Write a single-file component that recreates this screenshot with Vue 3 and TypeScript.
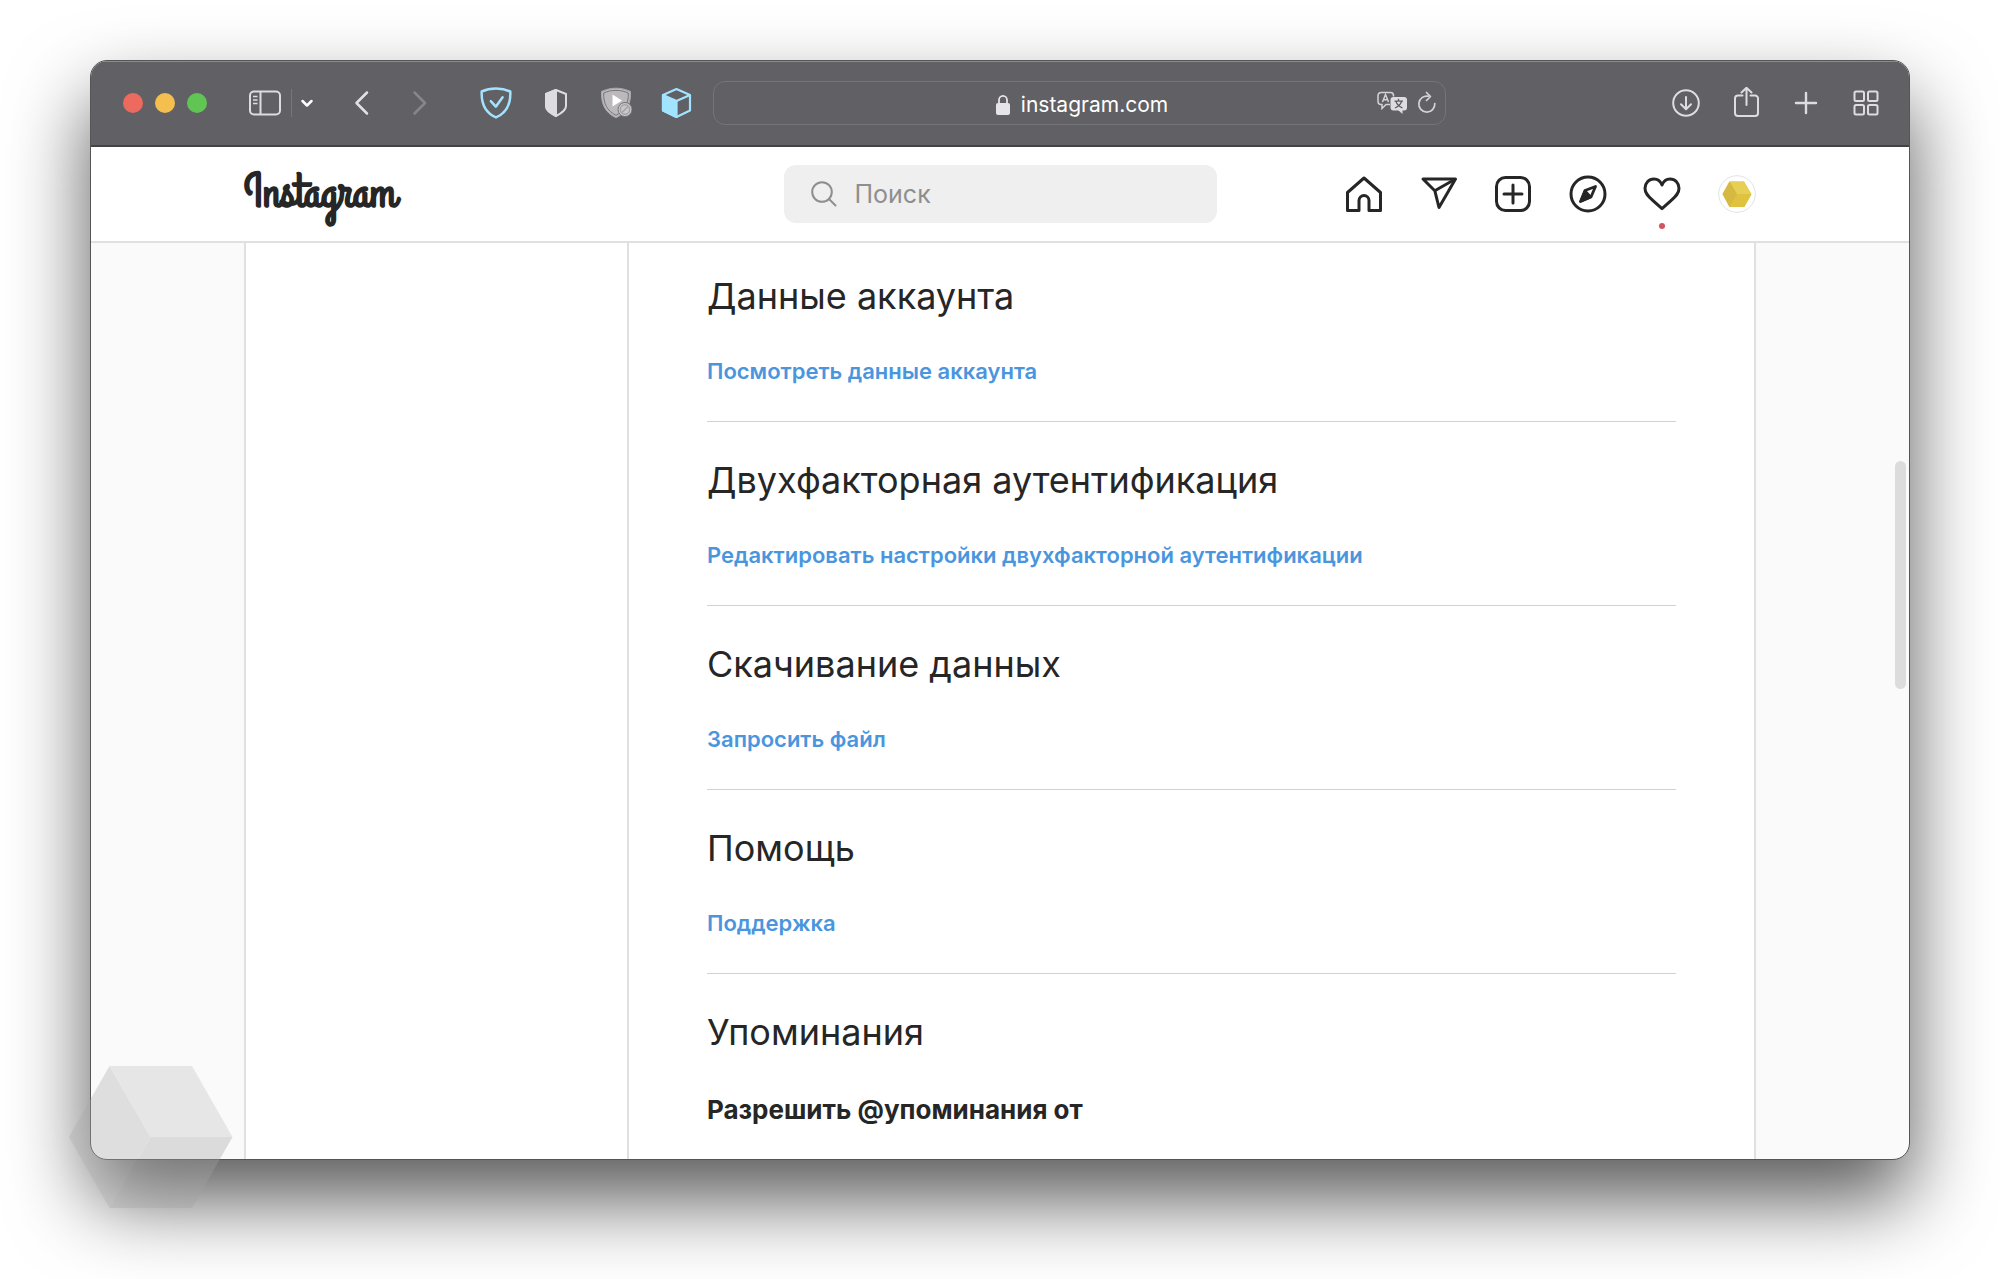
<script setup lang="ts">
interface Section {
  title: string
  link: string
}

const sections: Section[] = [
  { title: 'Данные аккаунта', link: 'Посмотреть данные аккаунта' },
  { title: 'Двухфакторная аутентификация', link: 'Редактировать настройки двухфакторной аутентификации' },
  { title: 'Скачивание данных', link: 'Запросить файл' },
  { title: 'Помощь', link: 'Поддержка' },
]
</script>

<template>
  <div class="page">
    <div class="window">
      <header class="toolbar">
        <div class="lights">
          <button class="light red" aria-label="Закрыть"></button>
          <button class="light yellow" aria-label="Свернуть"></button>
          <button class="light green" aria-label="Развернуть"></button>
        </div>
        <button class="sidebar-btn" aria-label="Боковое меню">
          <svg width="32" height="32" viewBox="0 0 32 32" fill="none" stroke="#dedce0" stroke-width="2">
            <rect x="1" y="4.500" width="30" height="23" rx="4" />
            <path d="M11.500 4.500v23" />
            <path d="M4 9.500h4.500M4 13h4.500M4 16.500h4.500" stroke-width="1.500" />
          </svg>
        </button>
        <span class="split"></span>
        <button class="chevron" aria-label="Группы вкладок">
          <svg width="14" height="14" viewBox="0 0 14 14" fill="none" stroke="#fff" stroke-width="2.500" stroke-linecap="round" stroke-linejoin="round">
            <path d="M2.500 5l4.500 4.500L11.500 5" />
          </svg>
        </button>
        <button class="back" aria-label="Назад">
          <svg width="16" height="32" viewBox="0 0 16 32" fill="none" stroke="#e2e0e4" stroke-width="2.500" stroke-linecap="round" stroke-linejoin="round">
            <path d="M13 5.500L2.500 16 13 26.500" />
          </svg>
        </button>
        <button class="forward" aria-label="Вперёд">
          <svg width="16" height="32" viewBox="0 0 16 32" fill="none" stroke="#88868a" stroke-width="2.500" stroke-linecap="round" stroke-linejoin="round">
            <path d="M2.500 5.500L13 16 2.500 26.500" />
          </svg>
        </button>
        <div class="extensions">
          <button aria-label="AdGuard">
            <svg width="32" height="32" viewBox="0 0 32 32" fill="none" stroke="#a2e4ff" stroke-width="2.500" stroke-linejoin="round" stroke-linecap="round">
              <path d="M1.700 4.500C6 2.500 10.500 1.600 16 1.600S26 2.500 30.300 4.500C30.800 16 27.500 25.500 16 30.400 4.500 25.500 1.200 16 1.700 4.500z" />
              <path d="M10.800 14.200l5 5.500 6.800-9.500" />
            </svg>
          </button>
          <button aria-label="Отчёт о конфиденциальности">
            <svg width="32" height="32" viewBox="0 0 32 32" fill="none" stroke="#dedce0" stroke-width="2" stroke-linejoin="round">
              <path d="M16 3L26 7v12c0 4.500-5 7.500-10 10-5-2.500-10-5.500-10-10V7z" />
              <path d="M16 3v26c-5-2.500-10-5.500-10-10V7z" fill="#dedce0" />
            </svg>
          </button>
          <button aria-label="Блокировка видео">
            <svg width="32" height="32" viewBox="0 0 32 32" fill="none">
              <path d="M1.500 4.500C6 2.500 10 1.200 16 1.200S26 2.500 30.500 4.500C31 16 27.500 25.500 16 30.700 4.500 25.500 1 16 1.500 4.500z" fill="#bbb9bb" stroke="#a9a7aa" />
              <path d="M3.700 6C8 4.200 11 3.400 16 3.400S24 4.200 28.300 6C28.600 16 25 24 16 28.300 7 24 3.400 16 3.700 6z" stroke="#77757a" />
              <path d="M12.500 7.500v12L22 13.500z" fill="#fff" />
              <circle cx="25" cy="22.500" r="7" fill="#c9c7c9" stroke="#77757a" />
              <circle cx="25" cy="22.500" r="4.700" stroke="#a3a1a5" stroke-width="1.500" />
              <path d="M22 25.500l6-6" stroke="#a3a1a5" stroke-width="1.500" />
            </svg>
          </button>
          <button aria-label="Кубик">
            <svg width="32" height="32" viewBox="0 0 32 32" fill="none" stroke="#a2e4ff" stroke-width="2.200" stroke-linejoin="round">
              <path d="M16.500 2L30 8v15.500L16.500 30 3 23.500V8z" />
              <path d="M3 8l13.500 6v16L3 23.500z" fill="#a2e4ff" />
              <path d="M16.500 14L30 8" />
            </svg>
          </button>
        </div>
        <div class="address">
          <div class="site">
            <svg width="16" height="22" viewBox="0 0 16 22" fill="none">
              <rect x="1" y="9" width="14" height="12" rx="2" fill="#e6e4e8" />
              <path d="M4 10V6a4 4.200 0 0 1 8 0v4" stroke="#e6e4e8" stroke-width="1.800" />
            </svg>
            <span>instagram.com</span>
          </div>
          <div class="address-actions">
            <button aria-label="Перевести">
              <svg width="30" height="24" viewBox="0 0 30 24" fill="none">
                <path d="M13 13.500H9L5 17.500v-4H4A3 3 0 0 1 1 10.500V4.500a3 3 0 0 1 3-3h9.500a3 3 0 0 1 3 3v1" stroke="#d4d2d6" stroke-width="1.500" />
                <path d="M5.500 11l3-7.500 3 7.500M6.500 8.700h4" stroke="#d4d2d6" stroke-width="1.500" />
                <rect x="13.500" y="6" width="16.500" height="13.500" rx="3" fill="#dedce0" />
                <path d="M21 19l4.500 4V19z" fill="#dedce0" />
                <path d="M21.500 7.800v2M17.500 10.200h8.500M19 10.500c1 3 3 5 6.500 6.500M24.500 10.500c-1 3-3 5-6.500 6.500" stroke="#5f5d61" stroke-width="1.300" />
              </svg>
            </button>
            <button aria-label="Обновить">
              <svg width="20" height="24" viewBox="0 0 20 24" fill="none" stroke="#d4d2d6" stroke-width="1.700" stroke-linecap="round" stroke-linejoin="round">
                <path d="M17.800 12.500a8 8 0 1 1-6.500-7.300" />
                <path d="M9.500 1.500l4 4-4 4" />
              </svg>
            </button>
          </div>
        </div>
        <div class="actions">
          <button aria-label="Загрузки">
            <svg width="32" height="32" viewBox="0 0 32 32" fill="none" stroke="#dedce0" stroke-width="2" stroke-linecap="round" stroke-linejoin="round">
              <circle cx="16" cy="16" r="12.800" />
              <path d="M16 10v12M11 17.300l5 5 5-5" />
            </svg>
          </button>
          <button aria-label="Поделиться">
            <svg width="32" height="32" viewBox="0 0 32 32" fill="none" stroke="#dedce0" stroke-width="2" stroke-linecap="round" stroke-linejoin="round">
              <path d="M12.500 8.500H8a3 3 0 0 0-3 3V26a3 3 0 0 0 3 3h17a3 3 0 0 0 3-3V11.500a3 3 0 0 0-3-3h-4.500" />
              <path d="M16.500 18V1M11.500 5.500l5-4.800 5 4.800" />
            </svg>
          </button>
          <button aria-label="Новая вкладка">
            <svg width="32" height="32" viewBox="0 0 32 32" fill="none" stroke="#dedce0" stroke-width="2.400" stroke-linecap="round">
              <path d="M16 6v20M6 16h20" />
            </svg>
          </button>
          <button aria-label="Все вкладки">
            <svg width="32" height="32" viewBox="0 0 32 32" fill="none" stroke="#dedce0" stroke-width="2">
              <rect x="4.500" y="4.500" width="9.500" height="9.500" rx="1.500" />
              <rect x="18" y="4.500" width="9.500" height="9.500" rx="1.500" />
              <rect x="4.500" y="18" width="9.500" height="9.500" rx="1.500" />
              <rect x="18" y="18" width="9.500" height="9.500" rx="1.500" />
            </svg>
          </button>
        </div>
      </header>

      <nav class="nav">
        <div class="nav-inner">
          <a class="logo" href="#">Instagram</a>
          <label class="search">
            <svg width="26" height="26" viewBox="0 0 26 26" fill="none" stroke="#8e8e8e" stroke-width="2" stroke-linecap="round">
              <circle cx="11" cy="11" r="9.800" />
              <path d="M18 18l6.500 6.500" />
            </svg>
            <input type="search" placeholder="Поиск" aria-label="Поиск" />
          </label>
          <div class="nav-icons">
            <a href="#" aria-label="Главная">
              <svg width="38" height="38" viewBox="0 0 38 38" fill="none" stroke="#262626" stroke-width="3" stroke-linejoin="round">
                <path d="M2.500 35.500V17.500L19 3l16.500 14.500v18H24V25.500a5 5 0 0 0-10 0v10z" />
              </svg>
            </a>
            <a href="#" aria-label="Сообщения">
              <svg width="38" height="38" viewBox="0 0 38 38" fill="none" stroke="#262626" stroke-width="3" stroke-linejoin="round">
                <path d="M3 4h32.500L19 32.500l-4.200-16.800z" />
                <path d="M14.800 15.700L35 4.300" />
              </svg>
            </a>
            <a href="#" aria-label="Создать">
              <svg width="38" height="38" viewBox="0 0 38 38" fill="none" stroke="#262626" stroke-width="3" stroke-linecap="round">
                <rect x="2.500" y="2.500" width="33" height="33" rx="9" />
                <path d="M19 10v18M10 19h18" />
              </svg>
            </a>
            <a href="#" aria-label="Интересное">
              <svg width="38" height="38" viewBox="0 0 38 38" fill="none" stroke="#262626" stroke-width="3" stroke-linejoin="round">
                <circle cx="19" cy="19" r="17" />
                <path d="M11.500 26.500L16 15.500 26.500 11.500 22 22z" stroke-width="2.800" />
                <path d="M11.500 26.500L16 15.500 22 22z" fill="#262626" stroke-width="2" />
              </svg>
            </a>
            <a href="#" class="activity" aria-label="Действия">
              <svg width="38" height="38" viewBox="0 0 38 38" fill="none" stroke="#262626" stroke-width="3" stroke-linejoin="round">
                <path d="M19 10C20.500 6.200 23.500 4 27 4c5.300 0 9 4.200 9 9.300 0 5.700-4 8.700-8 12.300L19 33.700l-9-8.100C6 22 2 19 2 13.300 2 8.200 5.700 4 11 4c3.500 0 6.500 2.200 8 6z" />
              </svg>
              <span class="dot"></span>
            </a>
            <a href="#" aria-label="Профиль">
              <svg width="38" height="38" viewBox="0 0 38 38">
                <circle cx="19" cy="19" r="18.300" fill="#fff" stroke="#e2e2e2" />
                <path d="M11.500 6.500h14.500L33.500 19.500 26.500 32H11.500L4.500 19z" fill="#dfc340" />
                <path d="M11.500 6.500h14.500L33.500 19H19z" fill="#e7cf55" />
                <path d="M11.500 6.500L19 19l-7.500 13L4.500 19z" fill="#d6b940" />
              </svg>
            </a>
          </div>
        </div>
      </nav>

      <main class="viewport">
        <div class="columns">
          <aside class="side"></aside>
          <div class="panel">
            <section v-for="s in sections" :key="s.title" class="section">
              <h2>{{ s.title }}</h2>
              <a href="#">{{ s.link }}</a>
            </section>
            <section class="section">
              <h2>Упоминания</h2>
              <h3>Разрешить @упоминания от</h3>
            </section>
          </div>
        </div>
        <span class="scrollbar"></span>
      </main>
    </div>

    <svg class="watermark" width="164" height="142" viewBox="0 0 164 142" aria-hidden="true">
      <path d="M40.500 0H123L163.500 71H81.500z" fill="#c2c2c2" />
      <path d="M40.500 0L81.500 71 40.500 142 0 71z" fill="#aaaaaa" />
      <path d="M81.500 71h82L123 142H40.500z" fill="#a2a2a2" />
    </svg>
  </div>
</template>

<style>
body {
  margin: 0;
  background: #fff;
}
</style>

<style scoped>
.page {
  position: relative;
  display: flex;
  flex-direction: column;
  box-sizing: border-box;
  min-height: 100vh;
  padding: 60px 90px 119px;
  overflow: hidden;
  font-family: Inter, "Liberation Sans", sans-serif;
  color: #262626;
}
button {
  display: flex;
  padding: 0;
  border: 0;
  background: none;
}
a {
  text-decoration: none;
}
svg {
  display: block;
  flex: none;
}
.window {
  display: flex;
  flex: 1;
  flex-direction: column;
  overflow: hidden;
  border: 1px solid #555;
  border-radius: 17px;
  background: #fafafa;
  box-shadow: 0 40px 80px rgba(0, 0, 0, 0.65);
}
.toolbar {
  display: flex;
  align-items: center;
  box-sizing: border-box;
  height: 86px;
  padding: 0 27px 0 32px;
  border-bottom: 2px solid #434245;
  background: #616064;
  box-shadow: inset 0 1px #8b8a8d;
}
.lights {
  display: flex;
  gap: 12px;
}
.light {
  width: 20px;
  height: 20px;
  border-radius: 50%;
}
.red {
  background: #ed6a5e;
}
.yellow {
  background: #f5bf4f;
}
.green {
  background: #61c554;
}
.sidebar-btn {
  margin-left: 42px;
}
.split {
  width: 1px;
  height: 28px;
  margin: 0 8px 0 10px;
  background: #77767a;
}
.back {
  margin-left: 40px;
}
.forward {
  margin-left: 42px;
}
.extensions {
  display: flex;
  gap: 28px;
  margin-left: 52px;
}
.address {
  display: flex;
  flex: 1;
  align-items: center;
  box-sizing: border-box;
  height: 44px;
  margin: 0 224px 0 21px;
  padding: 0 8px 0 72px;
  border: 1px solid #757478;
  border-radius: 12px;
}
.site {
  display: flex;
  flex: 1;
  align-items: center;
  justify-content: center;
  gap: 10px;
  padding-top: 4px;
  font-size: 21px;
  line-height: 28px;
  color: #fff;
}
.address-actions {
  display: flex;
  gap: 10px;
}
.actions {
  display: flex;
  gap: 28px;
}
.nav {
  display: flex;
  justify-content: center;
  box-sizing: border-box;
  height: 96px;
  padding: 0 153px;
  border-bottom: 2px solid #e0e0e0;
  background: #fff;
}
.nav-inner {
  display: grid;
  flex: 1;
  grid-template-columns: 1fr 433px 1fr;
  align-items: center;
  max-width: 1512px;
}
.logo {
  font-family: "Grand Hotel", "Liberation Serif", serif;
  font-size: 48px;
  font-weight: 700;
  line-height: 48px;
  color: #262626;
}
.search {
  display: flex;
  align-items: center;
  box-sizing: border-box;
  height: 58px;
  padding: 0 27px;
  gap: 18px;
  border-radius: 12px;
  background: #efefef;
}
.search input {
  flex: 1;
  min-width: 0;
  padding: 0;
  border: 0;
  outline: 0;
  background: none;
  font: 400 25px/32px Inter, "Liberation Sans", sans-serif;
  color: #262626;
}
.search input::placeholder {
  color: #8e8e8e;
}
.nav-icons {
  display: flex;
  justify-self: end;
  justify-content: space-between;
  width: 411px;
}
.activity {
  position: relative;
}
.dot {
  position: absolute;
  bottom: -16px;
  left: 16px;
  width: 6px;
  height: 6px;
  border-radius: 50%;
  background: #cf5560;
}
.viewport {
  position: relative;
  display: flex;
  flex: 1;
  justify-content: center;
  padding: 0 153px;
}
.columns {
  display: flex;
  flex: 1;
  box-sizing: border-box;
  max-width: 1512px;
  border: solid #e0e0e0;
  border-width: 0 2px;
  background: #fff;
}
.side {
  box-sizing: border-box;
  width: 383px;
  border-right: 2px solid #e0e0e0;
}
.panel {
  flex: 1;
  padding: 0 78px;
}
.section {
  display: flex;
  flex-direction: column;
  align-items: flex-start;
  gap: 37px;
  padding: 34px 0 36px;
  border-bottom: 1px solid #d2d2d2;
}
.section:first-child {
  padding-top: 29px;
}
.section:last-child {
  padding-bottom: 0;
  border: 0;
}
h2,
h3 {
  margin: 0;
}
h2 {
  font-size: 36px;
  font-weight: 400;
  line-height: 48px;
}
h3 {
  font-size: 26px;
  font-weight: 700;
  line-height: 34px;
}
.section a {
  font-size: 22px;
  font-weight: 600;
  line-height: 28px;
  color: #4a96de;
}
.scrollbar {
  position: absolute;
  top: 218px;
  right: 3px;
  width: 11px;
  height: 228px;
  border-radius: 6px;
  background: #dcdcdc;
}
.watermark {
  position: absolute;
  bottom: 71px;
  left: 69px;
  opacity: 0.34;
}
</style>
